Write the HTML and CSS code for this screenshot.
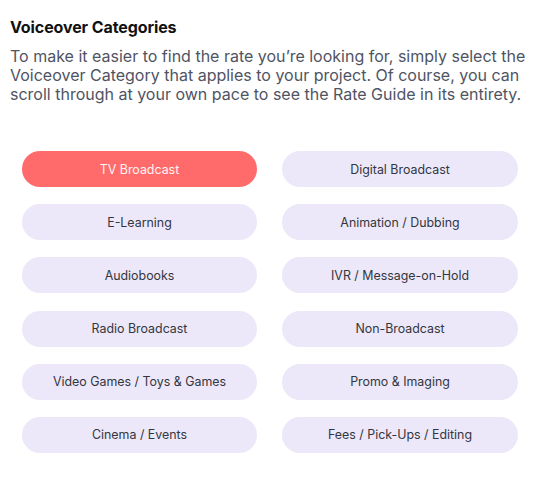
FILE: index.html
```html
<!DOCTYPE html>
<html lang="en">
<head>
<meta charset="utf-8">
<title>Voiceover Categories</title>
<link rel="stylesheet" href="styles.css">
</head>
<body>
<section class="categories">
  <h2 class="title">Voiceover Categories</h2>
  <p class="intro">To make it easier to find the rate you’re looking for, simply select the Voiceover Category that applies to your project. Of course, you can scroll through at your own pace to see the Rate Guide in its entirety.</p>
  <div class="grid">
    <button class="pill active">TV Broadcast</button>
    <button class="pill">Digital Broadcast</button>
    <button class="pill">E-Learning</button>
    <button class="pill">Animation / Dubbing</button>
    <button class="pill">Audiobooks</button>
    <button class="pill">IVR / Message-on-Hold</button>
    <button class="pill">Radio Broadcast</button>
    <button class="pill">Non-Broadcast</button>
    <button class="pill">Video Games / Toys &amp; Games</button>
    <button class="pill">Promo &amp; Imaging</button>
    <button class="pill">Cinema / Events</button>
    <button class="pill">Fees / Pick-Ups / Editing</button>
  </div>
</section>
</body>
</html>
```
FILE: styles.css
```css
html, body {
  margin: 0;
  padding: 0;
  background: #ffffff;
}
body {
  font-family: Inter, "Noto Sans", sans-serif;
}
.categories {
  padding: 17px 10px 0 10px;
}
.title {
  margin: 0;
  font-size: 16px;
  font-weight: 700;
  line-height: 20px;
  color: #111111;
  letter-spacing: -0.1px;
}
.intro {
  margin: 10px 0 0 0;
  font-size: 16px;
  line-height: 19px;
  color: #4f5463;
}
.grid {
  margin: 47px 16px 0 12px;
  display: grid;
  grid-template-columns: 235px 236px;
  column-gap: 25px;
  row-gap: 17.2px;
}
.pill {
  height: 36px;
  border: none;
  border-radius: 18px;
  background: #ece8f9;
  color: #333640;
  font-family: Inter, "Noto Sans", sans-serif;
  font-size: 12.4px;
  padding: 0;
  cursor: pointer;
}
.pill.active {
  background: #ff6b6b;
  color: #fff3f3;
}
```
